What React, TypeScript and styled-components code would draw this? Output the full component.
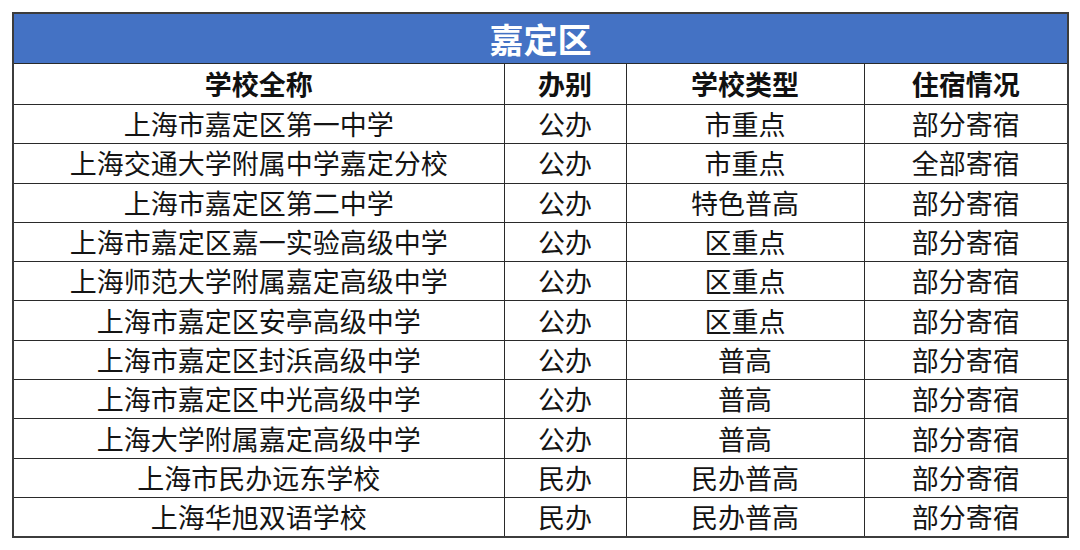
import React from 'react';
import styled, { createGlobalStyle } from 'styled-components';

const GlobalStyle = createGlobalStyle`
  html, body {
    margin: 0;
    padding: 0;
    background: #ffffff;
  }
  body {
    font-family: "Noto Sans CJK SC", "Noto Sans", sans-serif;
  }
`;

const Page = styled.div`
  width: 1080px;
  height: 550px;
  padding: 12px 0 0 12px;
  box-sizing: border-box;
  background: #ffffff;
`;

const Table = styled.table`
  width: 1055px;
  border-collapse: collapse;
  table-layout: fixed;
  border: 2px solid #3c3c3c;
  color: #141414;
`;

const Col = styled.col<{ $w: number }>`
  width: ${(p) => p.$w}px;
`;

const TitleCell = styled.th`
  height: 49px;
  padding: 0;
  background: #4472c4;
  color: #ffffff;
  font-size: 34px;
  font-weight: 700;
  line-height: 49px;
  text-align: center;
  border: 1px solid #2a2a2a;
`;

const HeadCell = styled.th`
  height: 40px;
  padding: 0;
  font-size: 27px;
  font-weight: 700;
  line-height: 38px;
  text-align: center;
  border: 1px solid #2a2a2a;
  color: #111;
`;

const Cell = styled.td`
  height: 38.3px;
  padding: 0;
  font-size: 27px;
  font-weight: 400;
  line-height: 36px;
  text-align: center;
  border: 1px solid #2a2a2a;
  white-space: nowrap;
`;

type Row = [string, string, string, string];

const rows: Row[] = [
  ['上海市嘉定区第一中学', '公办', '市重点', '部分寄宿'],
  ['上海交通大学附属中学嘉定分校', '公办', '市重点', '全部寄宿'],
  ['上海市嘉定区第二中学', '公办', '特色普高', '部分寄宿'],
  ['上海市嘉定区嘉一实验高级中学', '公办', '区重点', '部分寄宿'],
  ['上海师范大学附属嘉定高级中学', '公办', '区重点', '部分寄宿'],
  ['上海市嘉定区安亭高级中学', '公办', '区重点', '部分寄宿'],
  ['上海市嘉定区封浜高级中学', '公办', '普高', '部分寄宿'],
  ['上海市嘉定区中光高级中学', '公办', '普高', '部分寄宿'],
  ['上海大学附属嘉定高级中学', '公办', '普高', '部分寄宿'],
  ['上海市民办远东学校', '民办', '民办普高', '部分寄宿'],
  ['上海华旭双语学校', '民办', '民办普高', '部分寄宿'],
];

const headers = ['学校全称', '办别', '学校类型', '住宿情况'];
const widths = [491, 122, 238, 204];

export default function App() {
  return (
    <>
      <GlobalStyle />
      <Page>
        <Table>
          <colgroup>
            {widths.map((w, i) => (
              <Col key={i} $w={w} />
            ))}
          </colgroup>
          <thead>
            <tr>
              <TitleCell colSpan={4}>嘉定区</TitleCell>
            </tr>
            <tr>
              {headers.map((h) => (
                <HeadCell key={h}>{h}</HeadCell>
              ))}
            </tr>
          </thead>
          <tbody>
            {rows.map((r) => (
              <tr key={r[0]}>
                {r.map((v, i) => (
                  <Cell key={i}>{v}</Cell>
                ))}
              </tr>
            ))}
          </tbody>
        </Table>
      </Page>
    </>
  );
}
